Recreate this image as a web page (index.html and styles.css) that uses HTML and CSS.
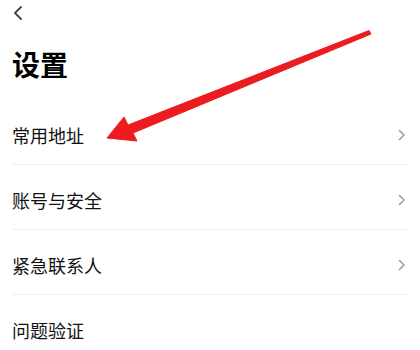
FILE: index.html
```html
<!DOCTYPE html>
<html lang="zh-CN">
<head>
<meta charset="utf-8">
<title>设置</title>
<link rel="stylesheet" href="styles.css">
</head>
<body>
<div class="page">
  <div class="topbar">
    <svg class="back" width="12" height="14" viewBox="0 0 12 14"><path d="M9 1 L3 7 L9 13" fill="none" stroke="#444" stroke-width="1.8" stroke-linecap="round" stroke-linejoin="round"/></svg>
  </div>
  <h1 class="title">设置</h1>
  <ul class="list">
    <li class="row"><span class="label">常用地址</span><svg class="chev" width="8" height="12" viewBox="0 0 8 12"><path d="M1.5 1.5 L6 6 L1.5 10.5" fill="none" stroke="#9a9a9a" stroke-width="1.5" stroke-linecap="round" stroke-linejoin="round"/></svg></li>
    <li class="row"><span class="label">账号与安全</span><svg class="chev" width="8" height="12" viewBox="0 0 8 12"><path d="M1.5 1.5 L6 6 L1.5 10.5" fill="none" stroke="#9a9a9a" stroke-width="1.5" stroke-linecap="round" stroke-linejoin="round"/></svg></li>
    <li class="row"><span class="label">紧急联系人</span><svg class="chev" width="8" height="12" viewBox="0 0 8 12"><path d="M1.5 1.5 L6 6 L1.5 10.5" fill="none" stroke="#9a9a9a" stroke-width="1.5" stroke-linecap="round" stroke-linejoin="round"/></svg></li>
    <li class="row"><span class="label">问题验证</span></li>
  </ul>
  <svg class="annot" width="420" height="350" viewBox="0 0 420 350">
    <polygon points="107,138 137,141 133,133 371,34 369,30.5 128,125 124,117" fill="#ec1b1f" stroke="#ec1b1f" stroke-width="1" stroke-linejoin="round"/>
  </svg>
</div>
</body>
</html>
```

FILE: styles.css
```css
html, body {
  margin: 0;
  padding: 0;
  background: #ffffff;
}
body {
  font-family: "Noto Sans CJK SC", "Noto Sans", sans-serif;
  color: #111;
}
.page {
  position: relative;
  width: 420px;
  height: 350px;
  overflow: hidden;
  padding: 0 12px;
  box-sizing: border-box;
}
.topbar {
  height: 26px;
  display: flex;
  align-items: flex-start;
}
.back {
  margin-top: 6px;
}
.title {
  margin: 0;
  height: 74px;
  padding-top: 3px;
  box-sizing: border-box;
  line-height: 70px;
  font-size: 28px;
  font-weight: 700;
  color: #000;
}
.list {
  list-style: none;
  margin: 0;
  padding: 0;
}
.row {
  height: 59px;
  padding-top: 5px;
  display: flex;
  align-items: center;
  justify-content: space-between;
  border-bottom: 1px solid #efefef;
}
.label {
  font-size: 18px;
  line-height: 24px;
  color: #111;
}
.chev {
  margin-right: 2px;
}
.annot {
  position: absolute;
  left: 0;
  top: 0;
  pointer-events: none;
}
```
